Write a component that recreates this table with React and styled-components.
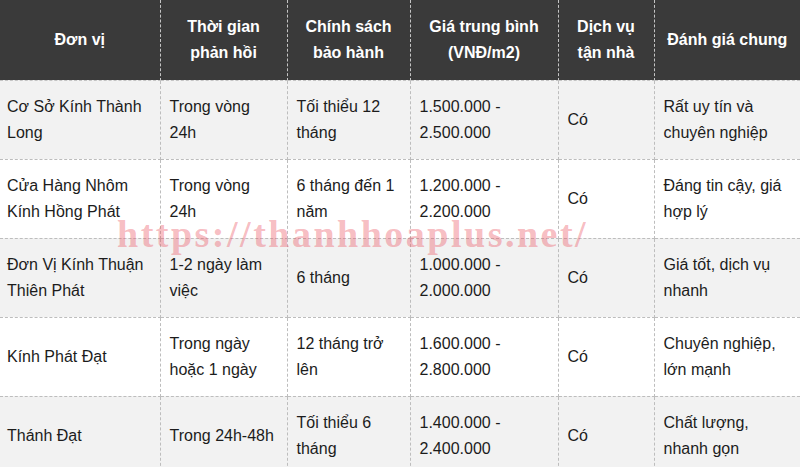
import styled, { createGlobalStyle } from "styled-components";

const GlobalStyle = createGlobalStyle`
  html, body {
    margin: 0;
    padding: 0;
    background: #fff;
    overflow: hidden;
  }
`;

const Wrapper = styled.div`
  position: relative;
  width: 800px;
  font-family: "Liberation Sans", Arial, sans-serif;
`;

const Table = styled.table`
  width: 800px;
  table-layout: fixed;
  border-collapse: collapse;
  font-size: 16px;
  line-height: 26px;
  color: #1c1c1c;
`;

const HeadRow = styled.tr`
  height: 80px;
  background-color: #3a3a3a;
`;

const Th = styled.th`
  color: #fff;
  font-weight: bold;
  text-align: center;
  vertical-align: middle;
  padding: 0 6px;
  border: 1px dashed #c4c4c4;
  border-top: none;
  &:first-child { border-left: none; }
  &:last-child { border-right: none; }
`;

const Row = styled.tr`
  height: 79px;
  background-color: ${props => (props.striped ? "#f2f2f2" : "#fff")};
`;

const Td = styled.td`
  text-align: left;
  vertical-align: middle;
  padding: 0 9px;
  border: 1px dashed #bdbdbd;
  &:first-child { border-left: none; padding-left: 7px; }
  &:last-child { border-right: none; }
`;

const Watermark = styled.div`
  position: absolute;
  left: 117px;
  top: 212px;
  font-family: "Liberation Serif", "Times New Roman", serif;
  font-weight: bold;
  font-size: 38px;
  letter-spacing: 2.5px;
  color: rgba(235, 85, 100, 0.4);
  pointer-events: none;
  white-space: nowrap;
`;

const widths = [160, 127, 123, 148, 96, 146];

const headers = [
  ["Đơn vị"],
  ["Thời gian", "phản hồi"],
  ["Chính sách", "bảo hành"],
  ["Giá trung bình", "(VNĐ/m2)"],
  ["Dịch vụ", "tận nhà"],
  ["Đánh giá chung"],
];

const rows = [
  [["Cơ Sở Kính Thành", "Long"], ["Trong vòng", "24h"], ["Tối thiểu 12", "tháng"], ["1.500.000 -", "2.500.000"], ["Có"], ["Rất uy tín và", "chuyên nghiệp"]],
  [["Cửa Hàng Nhôm", "Kính Hồng Phát"], ["Trong vòng", "24h"], ["6 tháng đến 1", "năm"], ["1.200.000 -", "2.200.000"], ["Có"], ["Đáng tin cậy, giá", "hợp lý"]],
  [["Đơn Vị Kính Thuận", "Thiên Phát"], ["1-2 ngày làm", "việc"], ["6 tháng"], ["1.000.000 -", "2.000.000"], ["Có"], ["Giá tốt, dịch vụ", "nhanh"]],
  [["Kính Phát Đạt"], ["Trong ngày", "hoặc 1 ngày"], ["12 tháng trở", "lên"], ["1.600.000 -", "2.800.000"], ["Có"], ["Chuyên nghiệp,", "lớn mạnh"]],
  [["Thánh Đạt"], ["Trong 24h-48h"], ["Tối thiểu 6", "tháng"], ["1.400.000 -", "2.400.000"], ["Có"], ["Chất lượng,", "nhanh gọn"]],
];

function Lines({ lines }) {
  return lines.map((l, i) => (
    <span key={i}>
      {i > 0 && <br />}
      {l}
    </span>
  ));
}

export default function App() {
  return (
    <>
      <GlobalStyle />
      <Wrapper>
        <Table>
          <colgroup>
            {widths.map((w, i) => (
              <col key={i} style={{ width: w }} />
            ))}
          </colgroup>
          <thead>
            <HeadRow>
              {headers.map((h, i) => (
                <Th key={i}>
                  <Lines lines={h} />
                </Th>
              ))}
            </HeadRow>
          </thead>
          <tbody>
            {rows.map((r, i) => (
              <Row key={i} striped={i % 2 === 0}>
                {r.map((c, j) => (
                  <Td key={j}>
                    <Lines lines={c} />
                  </Td>
                ))}
              </Row>
            ))}
          </tbody>
        </Table>
        <Watermark>https://thanhhoaplus.net/</Watermark>
      </Wrapper>
    </>
  );
}
